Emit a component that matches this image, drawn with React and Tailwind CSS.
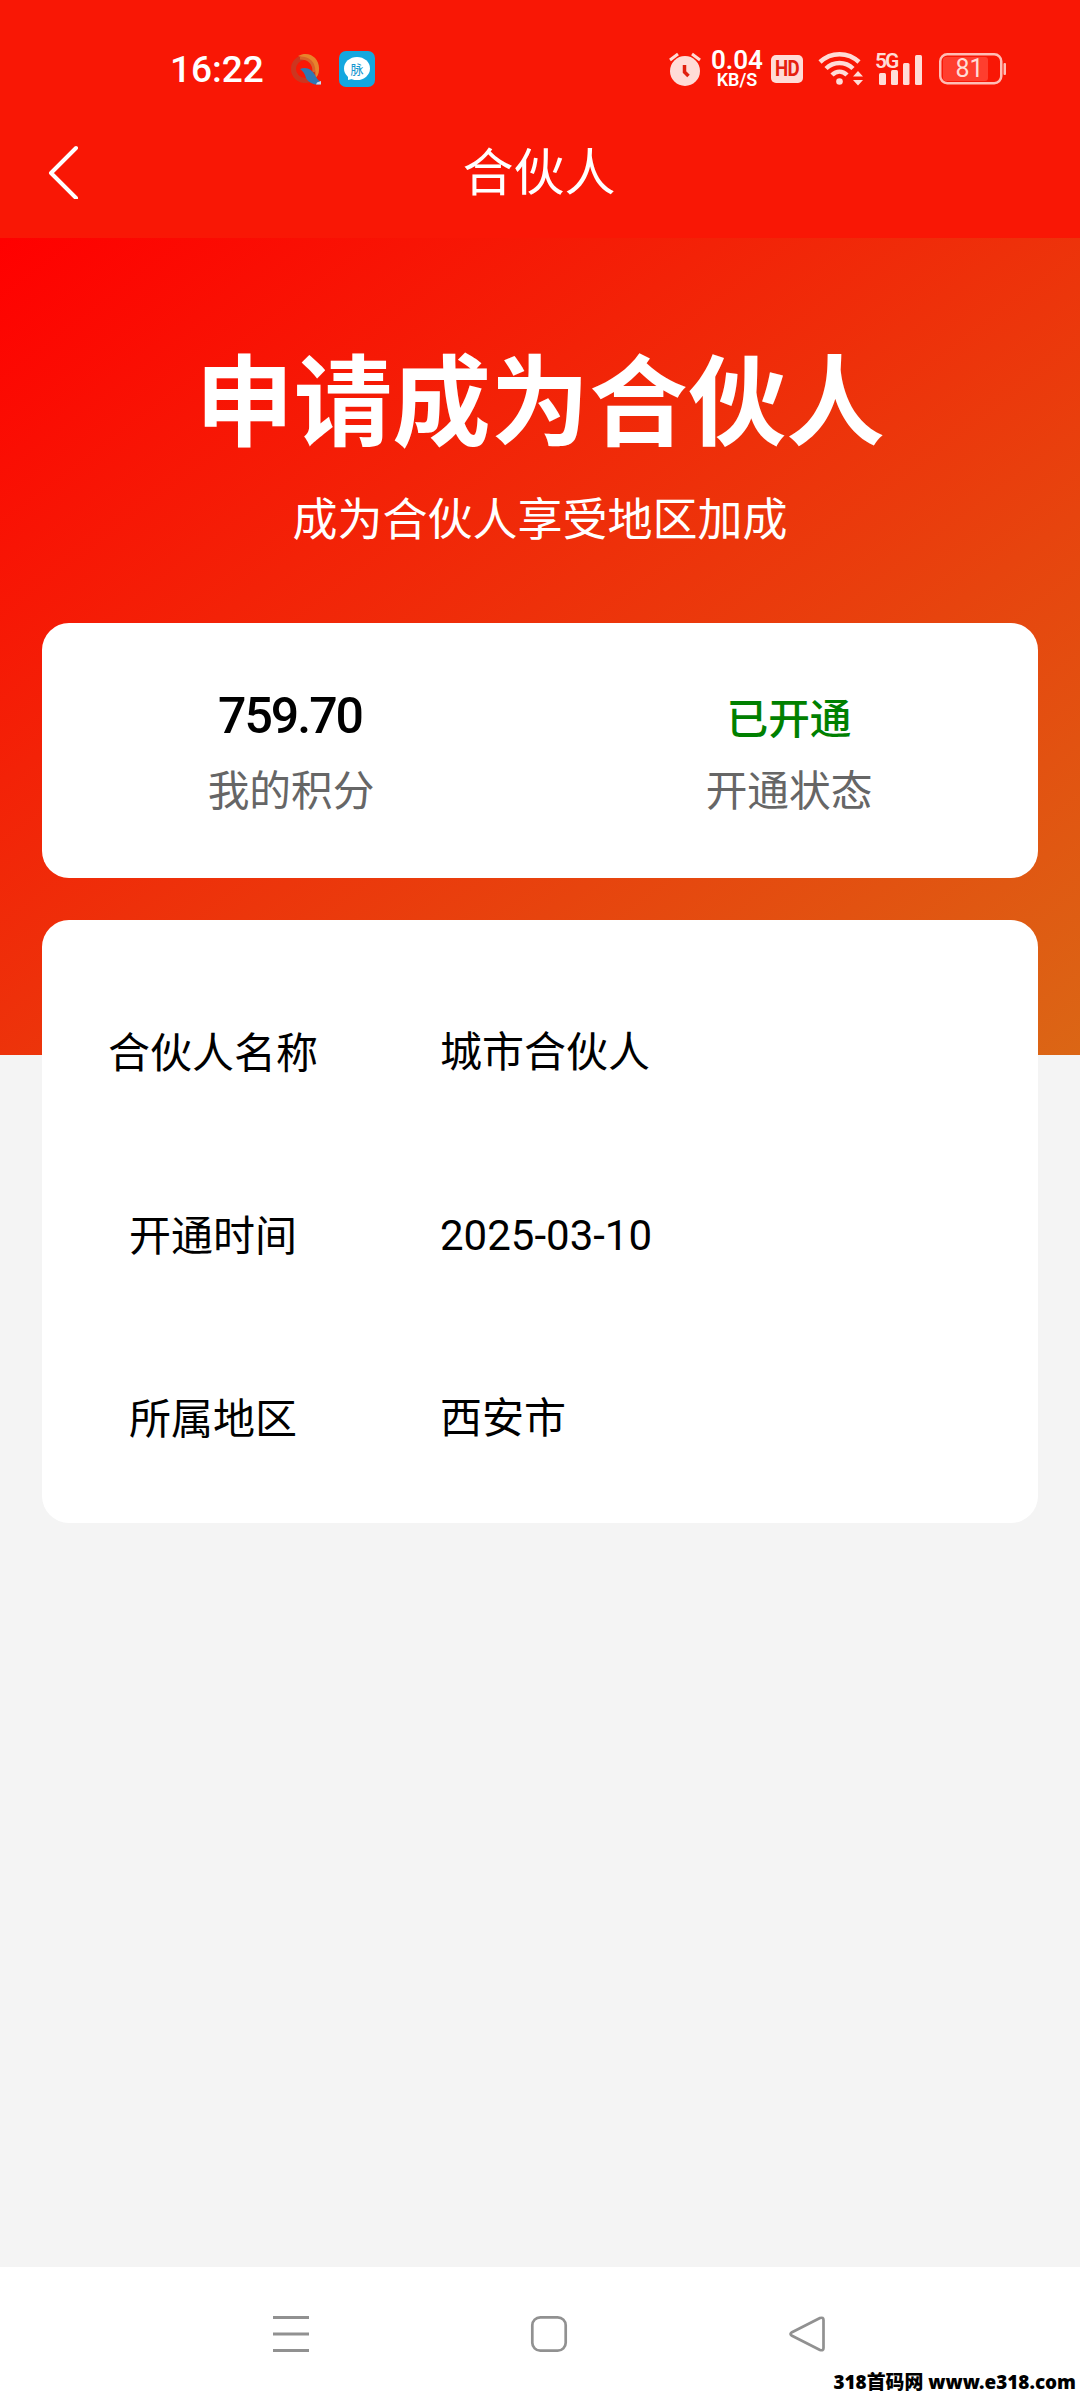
import React from 'react';

const details = [
  { label: '合伙人名称', value: '城市合伙人' },
  { label: '开通时间', value: '2025-03-10' },
  { label: '所属地区', value: '西安市' },
];

const QLogo = () => (
  <svg width="32" height="36" viewBox="0 0 32 36" className="ml-[27px] shrink-0" fill="none">
    <circle cx="15" cy="18" r="11.500" stroke="#b9452c" strokeWidth="5" opacity="0.7" />
    <path d="M8 5C19 -1 30 7 29 19C29 23 27 26 25 27C27 18 22 8 8 5Z" fill="#e8842c" />
    <path d="M10 7C19 7 24 12 24 21" stroke="#d9632a" strokeWidth="3" />
    <path d="M10 18C17 15 22 19 25 24C27 28 29 30 31 31V33C24 35 18 31 16 27C15 23 13 20 10 18Z" fill="#2f78b4" />
    <path d="M27 31.500L31 30V33.500H26Z" fill="#cfd8ea" />
  </svg>
);

const MaiMaiLogo = () => (
  <div className="relative ml-[17px] flex h-9 w-9 shrink-0 items-center justify-center">
    <svg width="36" height="36" viewBox="0 0 36 36" className="absolute inset-0">
      <rect width="36" height="36" rx="7" fill="#14a7df" />
      <ellipse cx="18" cy="17.500" rx="13" ry="11.500" fill="#fff" />
      <path d="M9 22V29L17 27Z" fill="#fff" />
    </svg>
    <span className="relative -top-px text-[13px] leading-none text-[#1597cf]">脉</span>
  </div>
);

const StatusBar = () => (
  <div className="flex h-[106px] items-center pt-8 pl-[170px] text-white">
    <span className="w-[93px] font-[Roboto,sans-serif] text-[37px] leading-none font-medium">16:22</span>
    <QLogo />
    <MaiMaiLogo />

    {/* Alarm */}
    <svg width="32" height="34" viewBox="0 0 32 34" className="ml-[294px]">
      <circle cx="16" cy="19" r="15" fill="#ffdcd7" />
      <path d="M1 8L9 2M23 2L31 8" stroke="#ffdcd7" strokeWidth="3" />
      <path d="M15.500 13V20L19.500 24" stroke="#e0200f" strokeWidth="3.500" fill="none" />
    </svg>

    {/* Network speed */}
    <div className="ml-[9px] flex w-[54px] flex-col items-center font-[Roboto,sans-serif] font-semibold">
      <span className="text-[26px] leading-[21px]">0.04</span>
      <span className="text-[18px] leading-[17px]">KB/S</span>
    </div>

    <div className="ml-[7px] flex h-7 w-8 items-center justify-center rounded-[5px] bg-[#ffdcd7] font-[Roboto,sans-serif] text-[22px] leading-none font-bold tracking-[-1px] text-[#e5200f]">
      <span className="scale-x-[0.85]">HD</span>
    </div>

    {/* Wifi */}
    <svg width="46" height="36" viewBox="0 0 46 36" className="ml-[15px]" fill="none">
      <path d="M2 11C13 0.500 30 0.500 41 11" stroke="#ffdcd7" strokeWidth="4.500" />
      <path d="M8 17.500C15.500 10 27.500 10 35 17.500" stroke="#ffdcd7" strokeWidth="4.500" />
      <path d="M14 24C18.500 19.500 24.500 19.500 29 24" stroke="#ffdcd7" strokeWidth="4.500" />
      <circle cx="21.500" cy="30.500" r="3.300" fill="#ffdcd7" />
      <path d="M35 25.500L40 20L45 25.500ZM35 29L40 34.500L45 29Z" fill="#ffdcd7" />
    </svg>

    {/* Mobile signal */}
    <div className="relative ml-3 h-[34px] w-[48px]">
      <svg width="48" height="34" viewBox="0 0 48 34" fill="#ffdcd7">
        <rect x="3" y="21" width="7" height="12" rx="1.500" />
        <rect x="15" y="18" width="7" height="15" rx="1.500" />
        <rect x="27" y="11" width="6.500" height="22" rx="1.500" />
        <rect x="39" y="3" width="7" height="30" rx="1.500" />
      </svg>
      <span className="absolute -top-px -left-px font-[Roboto,sans-serif] text-[21px] leading-[20px] font-semibold tracking-[-2px] text-[#ffdcd7]">
        5G
      </span>
    </div>

    {/* Battery */}
    <div className="relative ml-[15px] flex h-8 w-[68px]">
      <svg width="68" height="32" viewBox="0 0 68 32" fill="none">
        <rect x="4" y="4" width="45" height="24" rx="3" fill="#ff3e2e" />
        <rect x="1.250" y="1.250" width="61" height="29" rx="7" stroke="#ffbdb5" strokeWidth="2.500" />
        <rect x="64.500" y="10" width="2.500" height="12" rx="1" fill="#ffbdb5" />
      </svg>
      <span className="absolute top-0 left-0 w-[61px] text-center font-[Roboto,sans-serif] text-[25px] leading-8 text-[#ffdcd7]">
        81
      </span>
    </div>
  </div>
);

const Header = () => (
  <div className="flex h-[132px] items-center justify-between px-12 text-white">
    <svg width="32" height="54" viewBox="0 0 32 54" fill="none">
      <path d="M28 3L3 28L28 53" stroke="#fff" strokeWidth="4" strokeLinecap="round" strokeLinejoin="round" />
    </svg>
    <h1 className="-mt-1.5 pr-0.5 text-[51px] leading-none">合伙人</h1>
    <div className="w-8" />
  </div>
);

const NavBar = () => (
  <div className="bg-white">
    <div className="flex h-[101px] items-end justify-between pr-[254px] pb-[15px] pl-[272px]">
      <svg width="38" height="38" viewBox="0 0 38 38" stroke="#919191" strokeWidth="3">
        <path d="M1 2.500H37M1 19H37M1 35.500H37" />
      </svg>
      <svg width="38" height="38" viewBox="0 0 38 38" fill="none" stroke="#919191" strokeWidth="2.700">
        <rect x="2.300" y="2.300" width="33.400" height="33.400" rx="8" />
      </svg>
      <svg width="38" height="38" viewBox="0 0 38 38" fill="none" stroke="#919191" strokeWidth="2.700" strokeLinejoin="round">
        <path d="M32 3L3.500 17.500Q1.500 19 3.500 20.500L32 35Q35.500 36 35.500 33V5Q35.500 2 32 3Z" />
      </svg>
    </div>
    <p className="flex h-8 items-start justify-end pt-[5px] pr-1 font-['Noto_Sans','Noto_Sans_CJK_SC',sans-serif] text-[18.900px] leading-none font-black whitespace-pre text-black">
      318首码网 www.e318.com
    </p>
  </div>
);

export default function App() {
  return (
    <div className="flex h-[2400px] w-[1080px] flex-col overflow-hidden bg-[#f4f4f4] font-['Noto_Sans_CJK_SC',sans-serif] text-black">
      <div className="bg-[#f91705]">
        <StatusBar />
        <Header />
      </div>

      <main className="flex-1">
        <div className="h-[817px] bg-[linear-gradient(to_bottom_right,#ff0000,#db6615)] px-[42px] pt-[107px]">
          <h2 className="text-center text-[98.500px] leading-[100px] font-bold text-white">申请成为合伙人</h2>
          <p className="mt-[42px] text-center text-[45px] leading-[60px] text-white">成为合伙人享受地区加成</p>

          {/* Points and status */}
          <div className="mt-[76px] flex h-[255px] rounded-[27px] bg-white text-center">
            <div className="flex-1 pt-[61px]">
              <p className="-ml-0.5 font-[Roboto,sans-serif] text-[50px] leading-[64px] font-medium tracking-[-2px]">759.70</p>
              <p className="mt-[10px] text-[41.700px] leading-[60px] text-[#666]">我的积分</p>
            </div>
            <div className="flex-1 pt-[61px]">
              <p className="text-[41.700px] leading-[64px] font-medium text-[#008000]">已开通</p>
              <p className="mt-[10px] text-[41.700px] leading-[60px] text-[#666]">开通状态</p>
            </div>
          </div>

          {/* Partner details */}
          <div className="mt-[42px] h-[603px] rounded-[27px] bg-white pt-[41px]">
            {details.map(({ label, value }) => (
              <div key={label} className="flex h-[183px] items-center text-[42px] leading-none">
                <span className="-mt-1.5 w-[342px] text-center">{label}</span>
                <span className="pl-[56px] font-[Roboto,'Noto_Sans_CJK_SC',sans-serif]">{value}</span>
              </div>
            ))}
          </div>
        </div>
      </main>

      <NavBar />
    </div>
  );
}
